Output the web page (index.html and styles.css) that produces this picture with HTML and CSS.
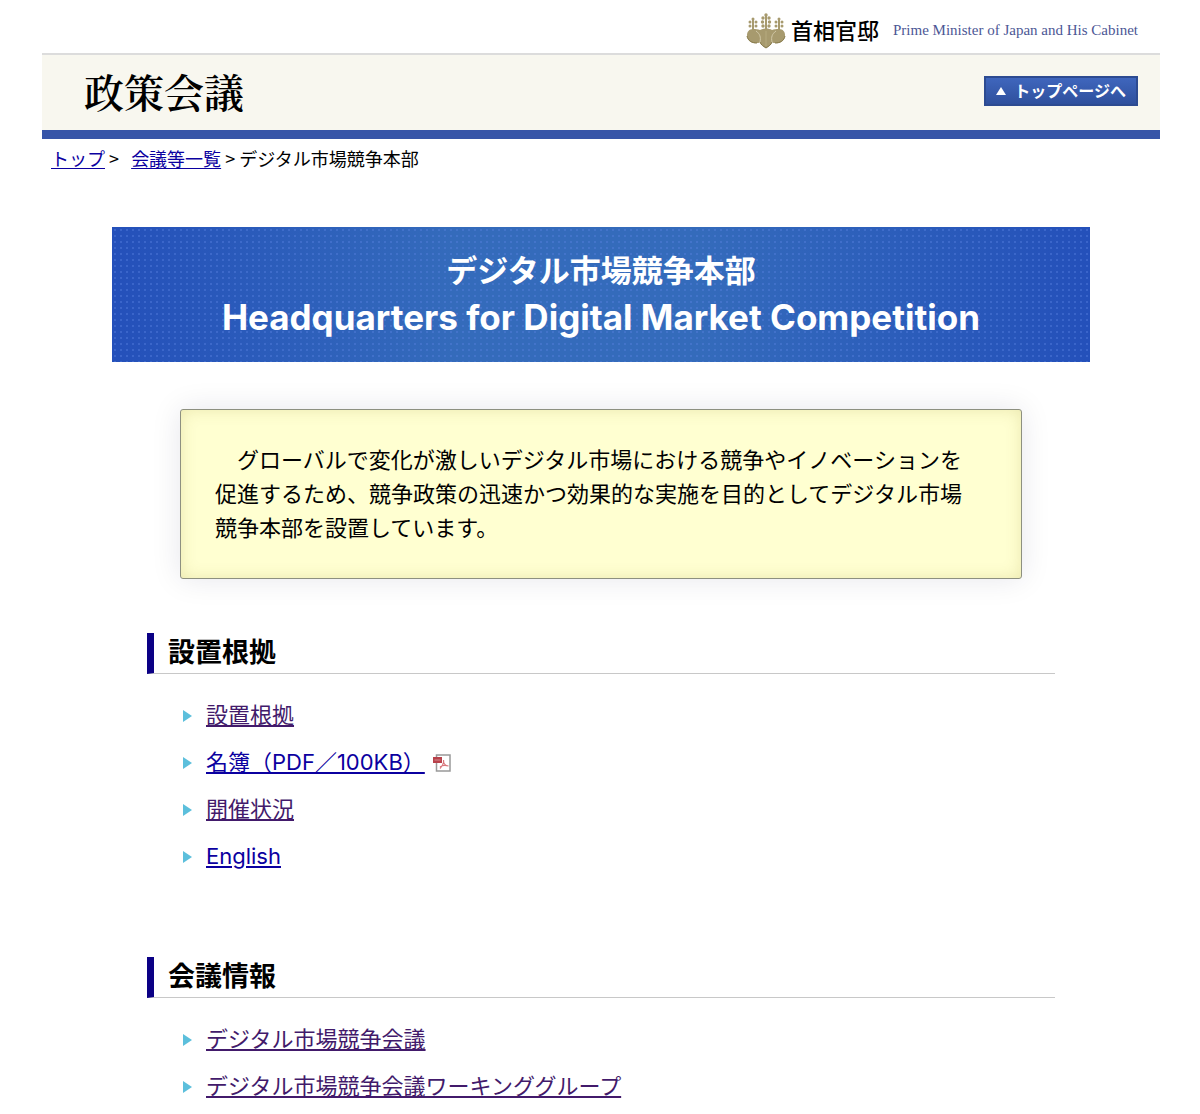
FILE: index.html
```
<!DOCTYPE html>
<html lang="ja">
<head>
    <meta charset="UTF-8">
    <meta name="viewport" content="width=device-width, initial-scale=1.0">
    <title>デジタル市場競争本部</title>
    <link rel="stylesheet" href="styles.css">
</head>
<body>
    <!-- Header -->
    <header>
        <div class="site-name">
            <svg class="crest" viewBox="0 0 40 36" width="40" height="36" aria-hidden="true">
                <g fill="#a79a6e">
                    <path d="M7 16c-4 0-6 3-6 6 0 5 4 9 10 8 1 0 2 0 3-1 1 3 3 4 6 6 3-2 5-3 6-6 1 1 2 1 3 1 6 1 10-3 10-8 0-3-2-6-6-6-3 0-5 0-7 1-3-2-9-2-12 0-2-1-4-1-7-1z"/>
                    <path d="M19 2h2v15h-2zM6 6h2v11H6zM32 6h2v11h-2z"/>
                    <circle cx="20" cy="2" r="1.700"/>
                    <circle cx="17" cy="5" r="1.700"/><circle cx="23" cy="5" r="1.700"/>
                    <circle cx="16.500" cy="9" r="1.700"/><circle cx="23.500" cy="9" r="1.700"/>
                    <circle cx="17" cy="13" r="1.700"/><circle cx="23" cy="13" r="1.700"/>
                    <circle cx="7" cy="6" r="1.500"/>
                    <circle cx="4" cy="9" r="1.500"/><circle cx="10" cy="9" r="1.500"/>
                    <circle cx="4" cy="13" r="1.500"/><circle cx="10" cy="13" r="1.500"/>
                    <circle cx="33" cy="6" r="1.500"/>
                    <circle cx="30" cy="9" r="1.500"/><circle cx="36" cy="9" r="1.500"/>
                    <circle cx="30" cy="13" r="1.500"/><circle cx="36" cy="13" r="1.500"/>
                </g>
                <path d="M14 29c1 3 3 4 6 6 3-2 5-3 6-6M1 23c1 5 5 7 10 7M39 23c-1 5-5 7-10 7" fill="none" stroke="#857848" stroke-width="1"/>
                <path d="M14 29c1-5 0-8-4-11M26 29c-1-5 0-8 4-11" fill="none" stroke="#d2c9a8" stroke-width="1"/>
                <path d="M20 18v15" fill="none" stroke="#bdb188" stroke-width="0.700"/>
            </svg>
            <span class="name-ja">首相官邸</span>
            <span class="name-en">Prime Minister of Japan and His Cabinet</span>
        </div>
        <div class="title-bar">
            <div class="site-title">政策会議</div>
            <a class="top-button" href="#">
                <svg viewBox="0 0 10 8" width="10" height="8" aria-hidden="true"><path d="M5 0l5 8H0z" fill="#fff"/></svg>
                トップページへ
            </a>
        </div>
    </header>

    <!-- Breadcrumb -->
    <nav class="breadcrumb">
        <a href="#">トップ</a> &gt; &nbsp;
        <a href="#">会議等一覧</a> &gt; デジタル市場競争本部
    </nav>

    <main>
        <h1>デジタル市場競争本部<span>Headquarters for Digital Market Competition</span></h1>

        <p class="lead">　グローバルで変化が激しいデジタル市場における競争やイノベーションを促進するため、競争政策の迅速かつ効果的な実施を目的としてデジタル市場競争本部を設置しています。</p>

        <section>
            <h2>設置根拠</h2>
            <ul>
                <li><a class="visited" href="#">設置根拠</a></li>
                <li>
                    <a href="#">名簿（PDF／100KB）</a>
                    <svg class="pdf" viewBox="0 0 18 18" width="18" height="18" aria-hidden="true">
                        <rect x="3.500" y="1" width="13.500" height="16" fill="#fff" stroke="#999" stroke-width="1.500"/>
                        <path d="M7 14.500c3-3 4-6 3.500-8.500M10.500 7c0 3 2.500 5 5 5M7 13c2-1.500 5-2 8.500-1" fill="none" stroke="#d9777c" stroke-width="1.200"/>
                        <rect x="0" y="3" width="9" height="6" fill="#b8414a"/>
                        <path d="M1.500 6h6" stroke="#d38a8f" stroke-width="1"/>
                    </svg>
                </li>
                <li><a class="visited" href="#">開催状況</a></li>
                <li><a href="#">English</a></li>
            </ul>
        </section>

        <section>
            <h2>会議情報</h2>
            <ul>
                <li><a class="visited" href="#">デジタル市場競争会議</a></li>
                <li><a class="visited" href="#">デジタル市場競争会議ワーキンググループ</a></li>
            </ul>
        </section>
    </main>
</body>
</html>
```

FILE: styles.css
```
/* General Styling */
body {
    margin: 0 40px 0 42px;
    font-family: Inter, "Noto Sans CJK JP", sans-serif;
    font-size: 22px;
    background-color: #fff;
    color: #000;
}

a {
    color: #0b00a0;
    text-underline-offset: 2px;
    text-decoration-thickness: 2px;
}

a.visited {
    color: #421a6b;
}

/* Header */
.site-name {
    display: flex;
    align-items: center;
    justify-content: flex-end;
    height: 45px;
    padding: 8px 22px 0 0;
}

.name-ja {
    margin: 0 14px 0 5px;
    font-size: 22px;
    font-weight: 500;
    line-height: 30px;
}

.name-en {
    font-family: "Liberation Serif", serif;
    font-size: 15px;
    color: #4c5795;
}

.title-bar {
    display: flex;
    align-items: center;
    justify-content: space-between;
    height: 72px;
    padding: 0 22px 3px 42px;
    background-color: #f8f7ef;
    border-top: 2px solid #dcdcdc;
    border-bottom: 9px solid #3755a8;
}

.site-title {
    font-family: "Noto Serif CJK JP", "Noto Sans CJK JP", serif;
    font-size: 40px;
    font-weight: 600;
    line-height: 48px;
}

.top-button {
    display: flex;
    align-items: center;
    gap: 8px;
    padding: 0 10px;
    border: 2px solid #2d4b91;
    background: linear-gradient(#3f66bd, #2f509d);
    color: #fff;
    font-size: 16px;
    font-weight: bold;
    line-height: 26px;
    text-decoration: none;
}

/* Breadcrumb */
.breadcrumb {
    padding: 5px 9px 0;
    font-family: "Noto Sans CJK JP", sans-serif;
    font-size: 18px;
    line-height: 28px;
}

.breadcrumb a {
    text-decoration-thickness: 1px;
}

/* Page Heading */
main {
    margin: 0 70px;
}

h1 {
    margin: 55px 0 47px;
    padding: 20px 0 21px;
    background:
        radial-gradient(circle, rgba(90, 130, 225, 0.4) 1px, transparent 1px) 0 0 / 6px 6px,
        linear-gradient(90deg, #2450ba, #346bbb 35%, #346bbb 60%, #2450ba);
    color: #fff;
    font-size: 31px;
    line-height: 47px;
    text-align: center;
}

h1 span {
    display: block;
    font-size: 35px;
}

/* Lead Text */
.lead {
    margin: 0 68px 54px;
    padding: 33px 47px 33px 34px;
    border: 1px solid #8d9080;
    border-radius: 3px;
    background-color: #ffffd1;
    box-shadow: 0 0 30px rgba(0, 0, 60, 0.1), inset 0 0 16px rgba(130, 110, 0, 0.16);
    line-height: 34px;
}

/* Sections */
section {
    margin: 0 35px;
}

section + section {
    margin-top: 77px;
}

h2 {
    margin: 0 0 18px;
    padding: 0 14px;
    border-left: 7px solid #0b0085;
    border-bottom: 1px solid #c8c8c8;
    font-size: 27px;
    line-height: 40px;
}

ul {
    margin: 0;
    padding: 0 0 0 36px;
    list-style: none;
}

li {
    display: flex;
    align-items: center;
    line-height: 47px;
}

li::before {
    content: "";
    margin-right: 14px;
    border-left: 9px solid #5cbfdc;
    border-top: 6px solid transparent;
    border-bottom: 6px solid transparent;
}

.pdf {
    margin-left: 8px;
}
```
